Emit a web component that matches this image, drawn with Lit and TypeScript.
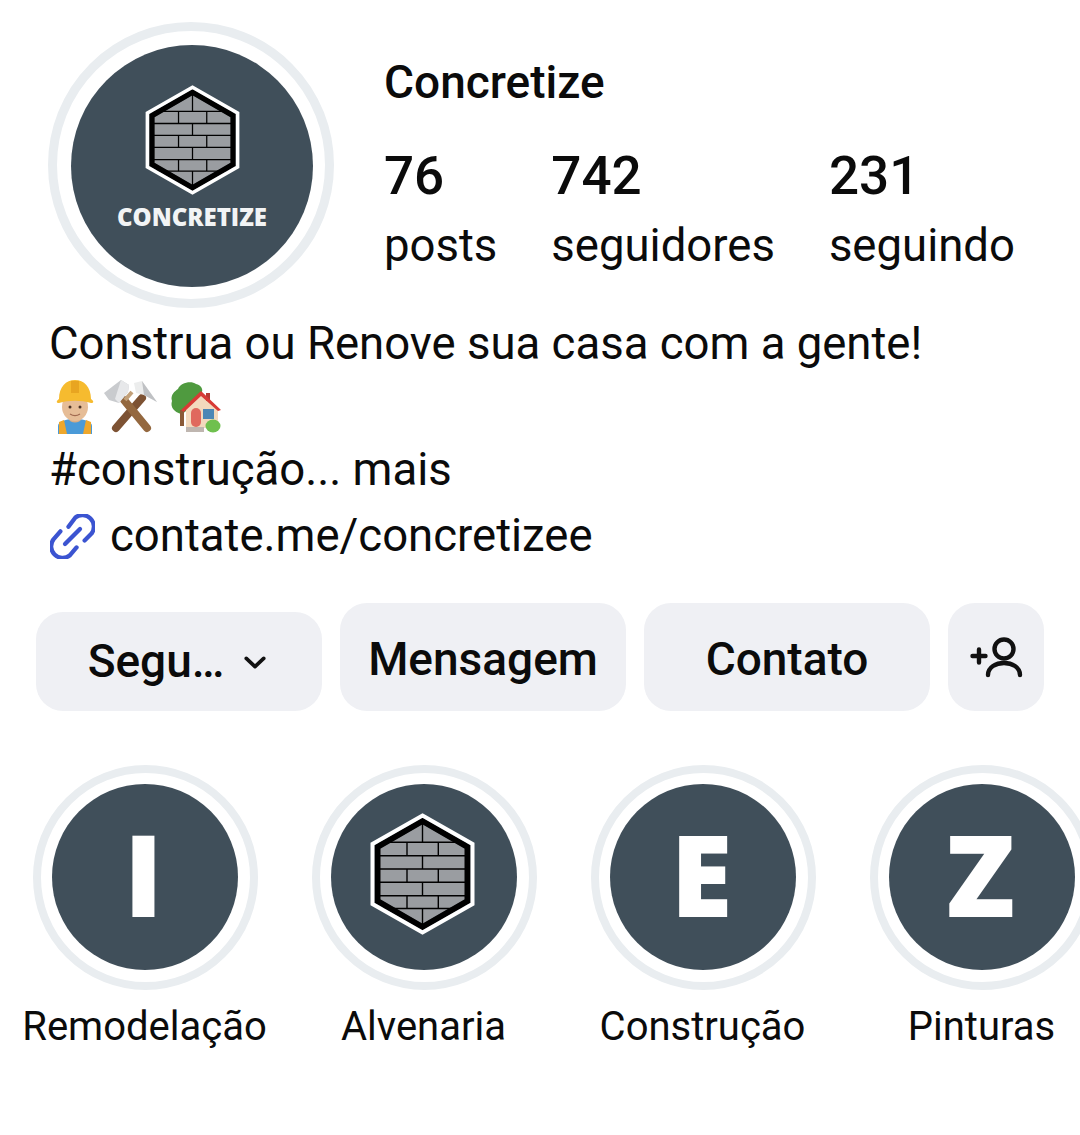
import { LitElement, css, html, svg } from 'lit'
import { customElement } from 'lit/decorators.js'

const highlights = [
  { label: 'Remodelação', letter: 'I' },
  { label: 'Alvenaria', letter: '' },
  { label: 'Construção', letter: 'E' },
  { label: 'Pinturas', letter: 'Z' },
]

const oddRow = [37, 68.3]
const evenRow = [52.5]
const rows = [
  { y: 16, cuts: evenRow },
  { y: 29.3, cuts: oddRow },
  { y: 42.7, cuts: evenRow },
  { y: 56, cuts: oddRow },
  { y: 69.3, cuts: evenRow },
  { y: 82.7, cuts: oddRow },
  { y: 95.5, cuts: evenRow },
]

// brick hexagon from the logo, size comes from the css class
const brickLogo = (cls: string) => html`
  <svg class=${cls} viewBox="0 0 105 122">
    <polygon points="52.5,11 96,36 96,86 52.5,111 9,86 9,36" fill="#9a9da1"></polygon>
    ${rows.map((r, i) => {
      const next = i < rows.length - 1 ? rows[i + 1].y : 111
      const top = i === 0 ? 11 : r.y
      return svg`
        ${i > 0 ? svg`<line x1="9" x2="96" y1=${r.y} y2=${r.y} stroke="#000" stroke-width="1.4"></line>` : ''}
        ${r.cuts.map((x) => svg`<line x1=${x} x2=${x} y1=${top} y2=${next} stroke="#000" stroke-width="1.4"></line>`)}
      `
    })}
    <polygon points="52.5,8 97.5,34 97.5,88 52.5,114 7.5,88 7.5,34" fill="none" stroke="#000" stroke-width="6"></polygon>
    <polygon points="52.5,2.5 102.5,31 102.5,91 52.5,119.5 2.5,91 2.5,31" fill="none" stroke="#fff" stroke-width="4"></polygon>
  </svg>
`

const workerEmoji = html`
  <svg class="emoji" viewBox="0 0 46 54">
    <path d="M6 54V46c0-4 6-7 17-7s17 3 17 7v8z" fill="#4a9ad8"></path>
    <path d="M7 42l5-2 3 14H7zM39 42l-5-2-3 14h8z" fill="#eea72c"></path>
    <path d="M16 38c2 6 12 6 14 0v-4H16z" fill="#d9ad85"></path>
    <ellipse cx="23" cy="27" rx="13" ry="14" fill="#e6bd97"></ellipse>
    <circle cx="18" cy="27" r="1.5" fill="#4a3226"></circle>
    <circle cx="28" cy="27" r="1.5" fill="#4a3226"></circle>
    <path d="M18 34c3 2 7 2 10 0" fill="none" stroke="#a16a50" stroke-width="1.2"></path>
    <path d="M7 19C7 7 14 0 23 0s16 7 16 19c3 2 3 4 0 4-10-3-22-3-32 0-3 0-3-2 0-4z" fill="#f6bb2f"></path>
    <path d="M19 1h8v12h-8z" fill="#e8a521"></path>
  </svg>
`

const hammersEmoji = html`
  <svg class="emoji" viewBox="0 0 54 54">
    <path d="M38 18L12 48" stroke="#7d5233" stroke-width="8" stroke-linecap="round"></path>
    <path d="M20 20L43 48" stroke="#94683f" stroke-width="8" stroke-linecap="round"></path>
    <path d="M28 12L21 20" stroke="#c2a079" stroke-width="4"></path>
    <path d="M0 13L17 0l8 5-1 7-9 11-10-3z" fill="#c9cbce"></path>
    <path d="M17 0l8 5-1 7-9 11-4-4z" fill="#e7e8ea"></path>
    <path d="M30 3l8-2 15 21-13-7-8-2z" fill="#eceded"></path>
    <path d="M38 1l15 21-13-7z" fill="#bfc1c4"></path>
  </svg>
`

const houseEmoji = html`
  <svg class="emoji house" viewBox="0 0 54 54">
    <path d="M12 34C5 32 1 27 3 21 1 15 6 11 9 9c2-6 13-9 18-5 5 1 7 5 6 8L16 32z" fill="#4f9a3f"></path>
    <rect x="11" y="30" width="4" height="16" fill="#8a5a38"></rect>
    <path d="M17 28L32 14l17 14v20H17z" fill="#f3d9bd"></path>
    <path d="M37 13h4v8h-4z" fill="#b63a33"></path>
    <path d="M12 30L32 11l20 19-3 1L32 16 15 32z" fill="#d83a35"></path>
    <rect x="22" y="28" width="10" height="19" rx="5" fill="#e0695e"></rect>
    <rect x="34" y="29" width="11" height="10" fill="#4c87b5"></rect>
    <rect x="17" y="47" width="18" height="5" fill="#bfb6b0"></rect>
    <ellipse cx="44" cy="46" rx="7.5" ry="6.5" fill="#6fc04e"></ellipse>
  </svg>
`

@customElement('app-root')
export class AppRoot extends LitElement {
  protected render() {
    return html`
      <div class="page">
        <header class="top">
          <div class="avatar-ring">
            <div class="avatar">
              ${brickLogo('avatar-logo')}
              <span class="avatar-name">CONCRETIZE</span>
            </div>
          </div>
          <div class="info">
            <div class="name">Concretize</div>
            <div class="stats">
              <div class="stat"><b>76</b><span>posts</span></div>
              <div class="stat"><b>742</b><span>seguidores</span></div>
              <div class="stat"><b>231</b><span>seguindo</span></div>
            </div>
          </div>
        </header>

        <section class="bio">
          <div class="line">Construa ou Renove sua casa com a gente!</div>
          <div class="emojis">${workerEmoji}${hammersEmoji}${houseEmoji}</div>
          <div class="line">#construção... mais</div>
          <div class="line link">
            <svg class="link-icon" viewBox="3 3 39 39" fill="none" stroke="#3b54d1" stroke-width="3.7" stroke-linecap="round" stroke-linejoin="round">
              <path d="M16 29L29 16"></path>
              <path d="M19 14L25 6a10 10 0 0 1 14 14L33 26"></path>
              <path d="M26 32L20 39a10 10 0 0 1-14-14L12 18"></path>
            </svg>
            <span>contate.me/concretizee</span>
          </div>
        </section>

        <div class="actions">
          <button class="btn first">
            <span>Segu…</span>
            <svg class="chevron" viewBox="0 0 24 14" fill="none" stroke="#111" stroke-width="4" stroke-linecap="round" stroke-linejoin="round">
              <path d="M2.5 2.5L12 11.5L21.5 2.5"></path>
            </svg>
          </button>
          <button class="btn">Mensagem</button>
          <button class="btn">Contato</button>
          <button class="btn add">
            <svg class="add-icon" viewBox="0 0 54 44" fill="none" stroke="#111" stroke-width="4.4" stroke-linecap="round">
              <circle cx="35" cy="12" r="9.5"></circle>
              <path d="M19 38c0-16 32-16 32 0"></path>
              <path d="M3.5 19h13M10 12.5v13"></path>
            </svg>
          </button>
        </div>

        <div class="highlights">
          ${highlights.map(
            (h) => html`
              <div class="highlight">
                <div class="ring">
                  <div class="disc">${h.letter ? html`<span class="letter">${h.letter}</span>` : brickLogo('disc-logo')}</div>
                </div>
                <div class="label">${h.label}</div>
              </div>
            `,
          )}
        </div>
      </div>
    `
  }

  static styles = css`
    :host {
      display: block;
      width: 1080px;
      height: 1135px;
      overflow: hidden;
      background: #fff;
      color: #0b0b0b;
      font-family: Roboto, 'Liberation Sans', sans-serif;
    }

    .page {
      padding-top: 22px;
    }

    .top {
      display: flex;
      padding-left: 48px;
      gap: 50px;
    }

    .avatar-ring {
      box-sizing: border-box;
      width: 286px;
      height: 286px;
      padding: 14px 12px 12px 14px;
      border: 9px solid #e9edf0;
      border-radius: 50%;
      flex: none;
    }

    .avatar {
      width: 100%;
      height: 100%;
      border-radius: 50%;
      background: #404f5a;
      display: flex;
      flex-direction: column;
      align-items: center;
      padding-top: 40px;
      box-sizing: border-box;
    }

    .avatar-logo {
      width: 95px;
      height: 110px;
      flex: none;
      overflow: visible;
    }

    .avatar-name {
      margin-top: 5px;
      font-family: 'Open Sans', sans-serif;
      font-weight: 800;
      font-size: 24px;
      line-height: 34px;
      color: #f2f4f5;
    }

    .info {
      padding-top: 32px;
    }

    .name {
      font-size: 46px;
      line-height: 56px;
      font-weight: 500;
    }

    .stats {
      display: flex;
      gap: 54px;
      margin-top: 34px;
    }

    .stat {
      display: flex;
      flex-direction: column;
    }

    .stat b {
      font-size: 53px;
      line-height: 64px;
      font-weight: 500;
    }

    .stat span {
      font-size: 45.5px;
      line-height: 58px;
      margin-top: 9px;
    }

    .bio {
      margin-top: 5px;
      padding-left: 49px;
      font-size: 45.5px;
    }

    .line {
      line-height: 62px;
    }

    .emojis {
      display: flex;
      align-items: center;
      height: 64px;
      padding-left: 3px;
      gap: 6px;
    }

    .emoji {
      height: 54px;
      width: auto;
      flex: none;
    }

    .house {
      margin-left: 5px;
    }

    .link {
      display: flex;
      align-items: center;
      gap: 15px;
      margin-top: 4px;
    }

    .link-icon {
      width: 45px;
      height: 45px;
      margin-left: 1px;
      flex: none;
    }

    .actions {
      display: flex;
      align-items: flex-end;
      gap: 18px;
      margin-top: 36px;
      padding-left: 36px;
    }

    .btn {
      width: 286px;
      height: 108px;
      border: none;
      border-radius: 27px;
      background: #eff0f4;
      color: #0b0b0b;
      font-family: inherit;
      font-size: 46px;
      font-weight: 500;
      display: flex;
      align-items: center;
      justify-content: center;
      padding: 4px 0 0;
      flex: none;
    }

    .btn.first {
      height: 99px;
      gap: 20px;
      padding: 0 4px 2px 0;
    }

    .chevron {
      width: 22px;
      height: 13px;
      flex: none;
      margin-top: 4px;
    }

    .btn.add {
      width: 96px;
    }

    .add-icon {
      width: 54px;
      height: 44px;
    }

    .highlights {
      display: flex;
      gap: 54px;
      margin-top: 54px;
      padding-left: 33px;
      width: max-content;
    }

    .highlight {
      width: 225px;
      flex: none;
      display: flex;
      flex-direction: column;
      align-items: center;
    }

    .ring {
      box-sizing: border-box;
      width: 225px;
      height: 225px;
      padding: 11px 12px 12px 11px;
      border: 8px solid #e9edf0;
      border-radius: 50%;
    }

    .disc {
      width: 100%;
      height: 100%;
      border-radius: 50%;
      background: #404f5a;
      display: flex;
      align-items: center;
      justify-content: center;
    }

    .disc-logo {
      width: 105px;
      height: 122px;
      margin: -6px 4px 0 0;
      overflow: visible;
    }

    .letter {
      font-family: 'Open Sans', sans-serif;
      font-weight: 800;
      font-size: 113px;
      line-height: 1;
      color: #fff;
      margin: -7px 3px 0 0;
    }

    .label {
      margin: 12px 2px 0 0;
      font-size: 40px;
      line-height: 50px;
      white-space: nowrap;
    }
  `
}

declare global {
  interface HTMLElementTagNameMap {
    'app-root': AppRoot
  }
}
